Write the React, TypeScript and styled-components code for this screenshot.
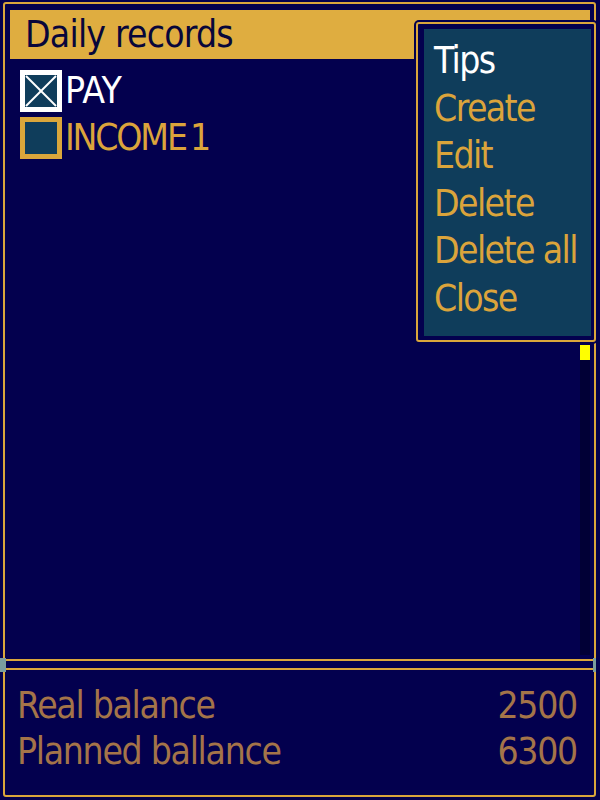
import React from "react";
import styled, { createGlobalStyle } from "styled-components";

const C = {
  navy: "#03004E",
  gold: "#DAA63B",
  title: "#DFAD40",
  titleText: "#08063A",
  teal: "#0F3D5B",
  menuText: "#DBA43B",
  brown: "#A47449",
  track: "#010036",
  thumb: "#FFFF00",
  joint: "#7A9C9E",
};

const Global = createGlobalStyle`
  html, body {
    margin: 0;
    padding: 0;
    background: ${C.navy};
  }
  body {
    font-family: "DejaVu Sans Condensed", "DejaVu Sans", sans-serif;
    font-stretch: condensed;
  }
`;

const Screen = styled.div`
  position: relative;
  box-sizing: border-box;
  width: 600px;
  height: 800px;
  padding: 2px 4px 3px 3px;
  display: flex;
  flex-direction: column;
  gap: 7px;
  background: ${C.navy};
  overflow: hidden;
`;

const Panel = styled.section`
  position: relative;
  box-sizing: border-box;
  height: 659px;
  border: 2px solid ${C.gold};
  border-radius: 3px;
  padding: 6px 4px 4px 5px;
  display: flex;
  flex-direction: column;
`;

const TitleBar = styled.div`
  height: 49px;
  line-height: 49px;
  background: ${C.title};
  color: ${C.titleText};
  font-size: 37px;
  letter-spacing: -0.8px;
  padding-left: 15px;
  white-space: nowrap;
`;

const Body = styled.div`
  flex: 1;
  display: flex;
  min-height: 0;
`;

const List = styled.ul`
  flex: 1;
  list-style: none;
  margin: 8px 0 0;
  padding: 0 0 0 10px;
`;

const Row = styled.li`
  height: 47px;
  display: flex;
  align-items: center;
  gap: 3px;
`;

const CheckBox = styled.span<{ $tone: "white" | "gold" }>`
  position: relative;
  box-sizing: border-box;
  width: 42px;
  height: 42px;
  flex: none;
  background: ${C.teal};
  border: 5px solid ${(p) => (p.$tone === "white" ? "#FFFFFF" : C.gold)};
  svg {
    display: block;
    width: 100%;
    height: 100%;
  }
`;

const Label = styled.span<{ $tone: "white" | "gold" }>`
  font-size: 37px;
  line-height: 47px;
  letter-spacing: ${(p) => (p.$tone === "white" ? "-0.5px" : "-2.2px")};
  word-spacing: -4px;
  color: ${(p) => (p.$tone === "white" ? "#FFFFFF" : C.menuText)};
  white-space: nowrap;
`;

const ScrollTrack = styled.div`
  width: 10px;
  margin-top: 286px;
  background: ${C.track};
  flex: none;
`;

const Thumb = styled.div`
  height: 15px;
  background: ${C.thumb};
`;

const Menu = styled.nav`
  position: absolute;
  top: 18px;
  right: -2px;
  box-sizing: border-box;
  width: 180px;
  height: 320px;
  border: 2px solid ${C.gold};
  border-radius: 3px;
  padding: 5px 3px 4px 6px;
  background: ${C.navy};
  box-shadow: 0 0 0 2px ${C.navy};
  display: flex;
`;

const MenuInner = styled.ul`
  flex: 1;
  list-style: none;
  margin: 0;
  padding: 8px 0 0 10px;
  background: ${C.teal};
`;

const MenuItem = styled.li<{ $active?: boolean }>`
  font-size: 37px;
  line-height: 47.6px;
  letter-spacing: -1.6px;
  color: ${(p) => (p.$active ? "#FFFFFF" : C.menuText)};
  white-space: nowrap;
`;

const Summary = styled.section`
  box-sizing: border-box;
  height: 129px;
  border: 2px solid ${C.gold};
  border-radius: 3px;
  padding: 12.7px 17px 0 12px;
  color: ${C.brown};
`;

const SummaryRow = styled.div`
  display: flex;
  justify-content: space-between;
  font-size: 37px;
  line-height: 46px;
  letter-spacing: -1.3px;
  white-space: nowrap;
`;

const Joint = styled.span<{ $side: "left" | "right" }>`
  position: absolute;
  top: 658px;
  ${(p) => (p.$side === "left" ? "left: 0;" : "right: 4px;")}
  width: ${(p) => (p.$side === "left" ? "6px" : "3px")};
  height: 14px;
  background: ${C.joint};
`;

const Cross = () => (
  <svg viewBox="0 0 32 32" preserveAspectRatio="none">
    <line x1="1" y1="1" x2="31" y2="31" stroke="#FFFFFF" strokeWidth="2" />
    <line x1="31" y1="1" x2="1" y2="31" stroke="#FFFFFF" strokeWidth="2" />
  </svg>
);

const records = [
  { name: "PAY", checked: true },
  { name: "INCOME 1", checked: false },
];

const menu = ["Create", "Edit", "Delete", "Delete all", "Close"];

export default function App() {
  return (
    <>
      <Global />
      <Screen>
        <Panel>
          <TitleBar>Daily records</TitleBar>
          <Body>
            <List>
              {records.map((r) => (
                <Row key={r.name}>
                  <CheckBox $tone={r.checked ? "white" : "gold"}>
                    {r.checked && <Cross />}
                  </CheckBox>
                  <Label $tone={r.checked ? "white" : "gold"}>{r.name}</Label>
                </Row>
              ))}
            </List>
            <ScrollTrack>
              <Thumb />
            </ScrollTrack>
          </Body>
          <Menu>
            <MenuInner>
              <MenuItem $active>Tips</MenuItem>
              {menu.map((m) => (
                <MenuItem key={m}>{m}</MenuItem>
              ))}
            </MenuInner>
          </Menu>
        </Panel>
        <Summary>
          <SummaryRow>
            <span>Real balance</span>
            <span>2500</span>
          </SummaryRow>
          <SummaryRow>
            <span>Planned ballance</span>
            <span>6300</span>
          </SummaryRow>
        </Summary>
        <Joint $side="left" />
        <Joint $side="right" />
      </Screen>
    </>
  );
}
